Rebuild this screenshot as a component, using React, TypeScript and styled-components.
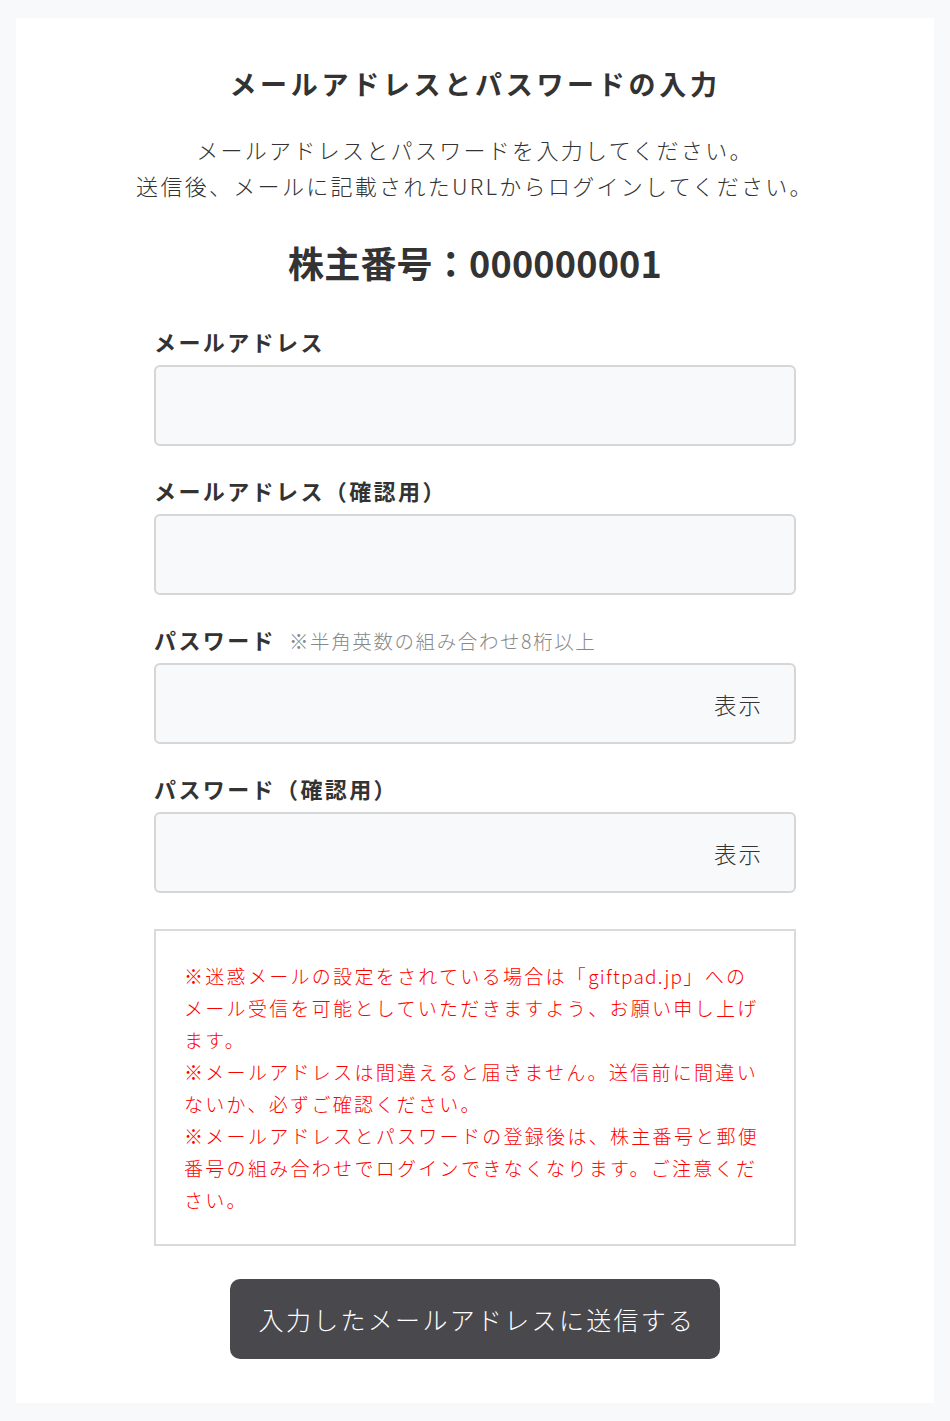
import React from "react";
import styled, { createGlobalStyle } from "styled-components";

const GlobalStyle = createGlobalStyle`
  html, body {
    margin: 0;
    padding: 0;
    background: #f8f9fa;
  }
  body {
    font-family: "Noto Sans CJK JP", "Noto Sans", sans-serif;
    color: #333;
  }
  * { box-sizing: border-box; }
`;

const Page = styled.div`
  padding: 18px 16px 19px;
`;

const Card = styled.main`
  background: #fff;
  padding: 46px 0 44px;
  display: flex;
  flex-direction: column;
  align-items: center;
`;

const Title = styled.h1`
  margin: 0;
  font-size: 27px;
  line-height: 40px;
  font-weight: 700;
  letter-spacing: 3.7px;
  color: #333;
  text-align: center;
`;

const Lead = styled.p`
  margin: 27px 0 0;
  font-size: 22px;
  line-height: 36px;
  font-weight: 300;
  letter-spacing: 2.3px;
  color: #333;
  text-align: center;
`;

const HolderNo = styled.div`
  margin-top: 34px;
  font-size: 36px;
  line-height: 50px;
  font-weight: 700;
  letter-spacing: 0.2px;
  color: #333;
`;

const Form = styled.form`
  width: 642px;
  margin-top: 38px;
  display: flex;
  flex-direction: column;
  gap: 28px;
`;

const Field = styled.div`
  display: flex;
  flex-direction: column;
  gap: 8px;
`;

const LabelRow = styled.div`
  display: flex;
  align-items: baseline;
  gap: 13px;
  height: 32px;
  line-height: 32px;
`;

const Label = styled.label`
  font-size: 22px;
  font-weight: 700;
  letter-spacing: 2.4px;
  color: #333;
`;

const Hint = styled.span`
  font-size: 19.5px;
  font-weight: 300;
  letter-spacing: 1.6px;
  color: #888;
`;

const InputWrap = styled.div`
  position: relative;
  height: 81px;
  background: #f8f9fa;
  border: 2px solid #d6d6d6;
  border-radius: 6px;
`;

const Input = styled.input`
  display: block;
  width: 100%;
  height: 100%;
  border: none;
  outline: none;
  background: transparent;
  padding: 0 100px 0 20px;
  font-size: 22px;
  font-family: inherit;
  color: #333;
`;

const Toggle = styled.button`
  position: absolute;
  right: 31px;
  top: 50%;
  transform: translateY(-50%);
  border: none;
  background: none;
  padding: 0;
  font-family: inherit;
  font-size: 22.5px;
  font-weight: 300;
  letter-spacing: 2px;
  color: #333;
  cursor: pointer;
`;

const Notice = styled.div`
  margin-top: 8px;
  border: 2px solid #dadada;
  padding: 29px 30px 28px 28px;
  color: #ff0000;
  font-size: 19px;
  font-weight: 300;
  line-height: 32px;
  letter-spacing: 2.3px;
`;

const NoticeLine = styled.p`
  margin: 0;
`;

const Domain = styled.span`
  letter-spacing: 1.3px;
`;

const Submit = styled.button`
  margin-top: 33px;
  height: 80px;
  padding: 0 25px 0 29px;
  background: #48484d;
  border: none;
  border-radius: 10px;
  color: #fff;
  font-family: inherit;
  font-size: 25px;
  font-weight: 300;
  letter-spacing: 2.3px;
  cursor: pointer;
`;

type FieldProps = {
  label: string;
  hint?: string;
  type: string;
  toggle?: boolean;
};

const FormField = ({ label, hint, type, toggle }: FieldProps) => (
  <Field>
    <LabelRow>
      <Label>{label}</Label>
      {hint && <Hint>{hint}</Hint>}
    </LabelRow>
    <InputWrap>
      <Input type={type} aria-label={label} />
      {toggle && <Toggle type="button">表示</Toggle>}
    </InputWrap>
  </Field>
);

export default function App() {
  return (
    <>
      <GlobalStyle />
      <Page>
        <Card>
          <Title>メールアドレスとパスワードの入力</Title>
          <Lead>
            メールアドレスとパスワードを入力してください。
            <br />
            送信後、メールに記載されたURLからログインしてください。
          </Lead>
          <HolderNo>株主番号：000000001</HolderNo>
          <Form onSubmit={(e) => e.preventDefault()}>
            <FormField label="メールアドレス" type="email" />
            <FormField label="メールアドレス（確認用）" type="email" />
            <FormField
              label="パスワード"
              hint="※半角英数の組み合わせ8桁以上"
              type="password"
              toggle
            />
            <FormField label="パスワード（確認用）" type="password" toggle />
            <Notice>
              <NoticeLine>
                ※迷惑メールの設定をされている場合は「<Domain>giftpad.jp</Domain>」への
                <wbr />
                メール受信を可能としていただきますよう、お願い申し上げます。
              </NoticeLine>
              <NoticeLine>
                ※メールアドレスは間違えると届きません。送信前に間違いないか、必ずご確認ください。
              </NoticeLine>
              <NoticeLine>
                ※メールアドレスとパスワードの登録後は、株主番号と郵便番号の組み合わせでログインできなくなります。ご注意ください。
              </NoticeLine>
            </Notice>
          </Form>
          <Submit type="button">入力したメールアドレスに送信する</Submit>
        </Card>
      </Page>
    </>
  );
}
